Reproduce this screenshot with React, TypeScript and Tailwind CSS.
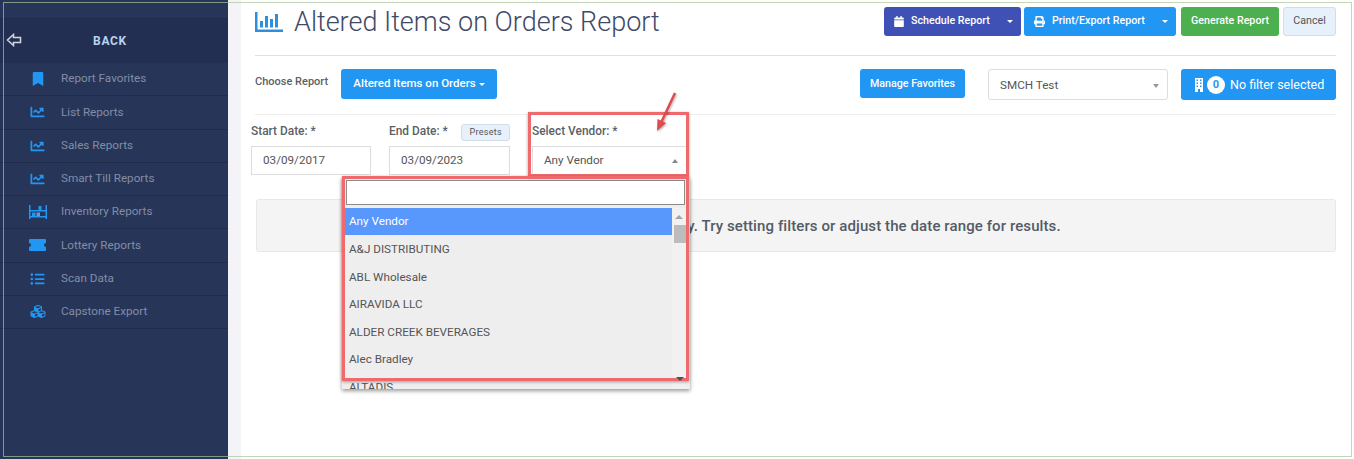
import React from "react";
import {
  FaBookmark,
  FaCalendar,
  FaChartLine,
  FaCubes,
  FaListUl,
  FaPrint,
} from "react-icons/fa";

function ShelfIcon() {
  return (
    <svg viewBox="0 0 18 14" className="h-[14px] w-[18px]">
      <path className="fill-[#2196f3]" d="M0 0h1.500v14H0zM16.500 0H18v14h-1.500zM1.500 5h15v1.500h-15zM1.500 11h15v1.500h-15zM9.500 1h3v4h-3zM3 7.500h3.500V11H3z" />
      <path className="fill-[#5f9bd8]" d="M7.500 7.500H11V11H7.500z" />
    </svg>
  );
}

function TicketIcon() {
  return (
    <svg viewBox="0 0 17 12" className="h-[12px] w-[17px] fill-[#2196f3]">
      <path d="M1 0h15a1 1 0 0 1 1 1v3a2 2 0 0 0 0 4v3a1 1 0 0 1-1 1H1a1 1 0 0 1-1-1V8a2 2 0 0 0 0-4V1a1 1 0 0 1 1-1z" />
    </svg>
  );
}

function BuildingIcon() {
  return (
    <svg viewBox="0 0 8 14" className="mr-[4px] h-[14px] w-[8px] fill-white">
      <path
        fillRule="evenodd"
        d="M0 0h8v14H5v-3H3v3H0zM1.500 1.500v1.500H3V1.500zM5 1.500v1.500h1.500V1.500zM1.500 4.500V6H3V4.500zM5 4.500V6h1.500V4.500zM1.500 7.500V9H3V7.500zM5 7.500V9h1.500V7.500z"
      />
    </svg>
  );
}

const menu = [
  { label: "Report Favorites", icon: <FaBookmark className="h-[14px] w-[12px]" /> },
  { label: "List Reports", icon: <FaChartLine className="h-[14px] w-[15px]" /> },
  { label: "Sales Reports", icon: <FaChartLine className="h-[14px] w-[15px]" /> },
  { label: "Smart Till Reports", icon: <FaChartLine className="h-[14px] w-[15px]" /> },
  { label: "Inventory Reports", icon: <ShelfIcon /> },
  { label: "Lottery Reports", icon: <TicketIcon /> },
  { label: "Scan Data", icon: <FaListUl className="h-[14px] w-[15px]" /> },
  { label: "Capstone Export", icon: <FaCubes className="h-[15px] w-[16px]" /> },
];

const vendors = [
  "A&J DISTRIBUTING",
  "ABL Wholesale",
  "AIRAVIDA LLC",
  "ALDER CREEK BEVERAGES",
  "Alec Bradley",
  "ALTADIS",
];

function Sidebar() {
  return (
    <aside className="flex h-full w-[228px] shrink-0 flex-col bg-[#273558]">
      <div className="h-[19px] border-b border-[#1f2b4b]" />
      <div className="relative flex h-[44px] items-center justify-center bg-[#222f53] pr-[8px] text-[12px] font-bold tracking-[0.7px] text-[#b9d3ee]">
        <svg viewBox="0 0 16 14" className="absolute left-[6px] top-[14px] h-[14px] w-[16px] fill-none stroke-[#d2d6dd] stroke-[1.5]">
          <path d="M7.500 1.500 1.500 7l6 5.500V9.500h7v-5h-7z" />
        </svg>
        BACK
      </div>
      {menu.map((item) => (
        <div
          key={item.label}
          className="flex h-[33.25px] items-center border-b border-[#1f2b4b] text-[11.7px] text-[#838da6]"
        >
          <span className="flex w-[61px] shrink-0 justify-center pl-[14px] text-[#2196f3]">{item.icon}</span>
          <span>{item.label}</span>
        </div>
      ))}
    </aside>
  );
}

function TopBar() {
  return (
    <div className="flex h-[56px] items-start justify-between border-b border-[#dfdfdf]">
      <div className="flex items-center pt-[3px]">
        <svg viewBox="0 0 28 20" className="mr-[11px] h-[20px] w-[28px] fill-[#2f8fdf]">
          <path d="M0 0h2.500v17.500H28V20H0zM5 9h3v6.500H5zM10 4h3v11.500h-3zM15 7h3v8.500h-3zM20 2h3v13.500h-3z" />
        </svg>
        <h1 className="text-[27px] leading-[38px] font-light text-[#3f4a68]">Altered Items on Orders Report</h1>
      </div>
      <div className="flex items-start pt-[7px] text-[10.7px] font-medium text-white">
        <button className="flex h-[29px] w-[137px] items-center rounded-[3px] bg-[#3f51b5] pl-[10px]">
          <FaCalendar className="mr-[7px] h-[11px] w-[10px]" />
          Schedule Report
          <span className="ml-[17px] h-0 w-0 border-x-[3px] border-t-[3px] border-x-transparent border-t-white" />
        </button>
        <button className="ml-[3px] flex h-[29px] w-[152px] items-center rounded-[3px] bg-[#2196f3] pl-[10px]">
          <FaPrint className="mr-[7px] h-[11px] w-[11px]" />
          Print/Export Report
          <span className="ml-[17px] h-0 w-0 border-x-[3px] border-t-[3px] border-x-transparent border-t-white" />
        </button>
        <button className="ml-[5px] h-[29px] w-[98px] rounded-[3px] bg-[#4caf50]">Generate Report</button>
        <button className="ml-[4px] h-[29px] w-[53px] rounded-[3px] border border-[#d3dde6] bg-[#e6f1fb] font-normal text-[#555]">
          Cancel
        </button>
      </div>
    </div>
  );
}

function ChooseRow() {
  return (
    <div className="flex h-[59px] items-start border-b border-[#eeeeee] pt-[13px]">
      <span className="mt-[5px] w-[86px] text-[11px] font-medium text-[#5b5f66]">Choose Report</span>
      <button className="h-[30px] w-[156px] rounded-[3px] bg-[#2196f3] text-[11.5px] font-medium text-white">
        Altered Items on Orders
        <span className="ml-[3px] inline-block h-0 w-0 border-x-[3px] border-t-[3px] border-x-transparent border-t-white align-middle" />
      </button>
      <button className="ml-[363px] h-[29px] w-[105px] rounded-[3px] bg-[#2196f3] pt-[1px] text-[10.7px] font-medium text-white">
        Manage Favorites
      </button>
      <div className="ml-[23px] flex h-[31px] w-[180px] items-center justify-between rounded-[3px] border border-[#ddd] bg-white pt-[2px] pr-[8px] pl-[11px] text-[11.7px] text-[#555]">
        SMCH Test
        <span className="h-0 w-0 border-x-[3px] border-t-[4px] border-x-transparent border-t-[#999]" />
      </div>
      <button className="ml-[13px] flex h-[31px] w-[155px] items-center rounded-[3px] bg-[#2196f3] pt-[1px] pl-[14px] text-[12.5px] text-white">
        <BuildingIcon />
        <span className="mr-[5px] flex h-[18px] w-[18px] items-center justify-center rounded-full bg-white text-[11px] font-bold text-[#2196f3]">0</span>
        No filter selected
      </button>
    </div>
  );
}

function Field({ label, value, width, children, caret }: { label: string; value: string; width: string; children?: React.ReactNode; caret?: boolean }) {
  return (
    <div className={width}>
      <div className="flex h-[31px] items-center justify-between pt-[2px] text-[11.9px] font-medium text-[#5b5f66]">
        {label}
        {children}
      </div>
      <div className="flex h-[29px] items-center justify-between border border-[#ddd] bg-white pr-[9px] pl-[11px] text-[11.7px] text-[#555]">
        {value}
        {caret && <span className="h-0 w-0 border-x-[3px] border-b-[4px] border-x-transparent border-b-[#888]" />}
      </div>
    </div>
  );
}

function VendorDropdown() {
  return (
    <div className="absolute top-[177px] left-[342px] h-[212px] w-[348px] overflow-hidden bg-[#eeeeee] px-[3px] pt-[3px] shadow-[0_2px_4px_rgba(0,0,0,0.4)]">
      <div className="mr-[2px] mb-[3px] ml-[1px] h-[25px] border border-[#8b8b8b] bg-white" />
      <div className="relative">
        <div className="flex h-[27.25px] w-[327px] items-center bg-[#5897fb] pt-[1px] pl-[4px] text-[11.7px] text-white">Any Vendor</div>
        {vendors.map((v) => (
          <div key={v} className="flex h-[27.5px] w-[327px] items-center pt-[2px] pl-[4px] text-[11.7px] text-[#555]">{v}</div>
        ))}
        <div className="absolute top-0 left-[327px] h-full w-[14px] bg-[#f1f1f1]">
          <span className="absolute top-[7px] left-[3px] h-0 w-0 border-x-[4px] border-b-[4px] border-x-transparent border-b-[#a3a3a3]" />
          <div className="absolute top-[17px] left-[2px] h-[18px] w-[12px] bg-[#bcbcbc]" />
        </div>
      </div>
    </div>
  );
}

function Annotations() {
  return (
    <>
      <div className="absolute top-[112px] left-[528px] h-[65px] w-[161px] border-[3px] border-[#ef6a6d] shadow-[0_1px_3px_rgba(0,0,0,0.35)]" />
      <div className="absolute top-[176px] left-[342px] h-[205px] w-[347px] border-[3px] border-[#ef6a6d] shadow-[0_1px_3px_rgba(0,0,0,0.35)]" />
      <span className="absolute top-[377px] left-[676px] h-0 w-0 border-x-[4px] border-t-[4px] border-x-transparent border-t-[#505050]" />
      <svg viewBox="0 0 30 50" className="absolute top-[90px] left-[652px] h-[50px] w-[30px] drop-shadow-[1px_1px_1px_rgba(0,0,0,0.3)]">
        <path d="M23 3 8 35" className="fill-none stroke-[#e2494c] stroke-[2.5]" />
        <path d="M5 41 5.500 29 14 33z" className="fill-[#e2494c]" />
      </svg>
    </>
  );
}

export default function App() {
  return (
    <div className="relative flex h-[459px] w-[1354px] overflow-hidden bg-white font-['Roboto',sans-serif]">
      <Sidebar />
      <div className="h-full w-[13px] shrink-0 bg-[#f3f3f8]" />
      <main className="min-w-0 flex-1 pr-[18px]">
        <div className="ml-[14px]">
          <TopBar />
          <ChooseRow />
        </div>
        <div className="ml-[10px] flex">
          <Field label="Start Date: *" value="03/09/2017" width="w-[120px]" />
          <div className="w-[18px]" />
          <Field label="End Date: *" value="03/09/2023" width="w-[121px]">
            <span className="mt-[2px] rounded-[3px] border border-[#d3dde6] bg-[#e6f1fb] px-[7px] py-[1px] text-[9px] font-normal tracking-[0.3px] text-[#555]">Presets</span>
          </Field>
          <div className="w-[22px]" />
          <Field label="Select Vendor: *" value="Any Vendor" width="w-[156px]" caret>
            <span />
          </Field>
        </div>
        <div className="mt-[24px] ml-[15px] flex h-[53px] items-center justify-center rounded-[3px] border border-[#e8e8e8] bg-[#f4f4f4] pt-[2px] pr-[8px] text-[15px] tracking-[0.1px] font-medium text-[#555b66]">
          Report is currently empty. Try setting filters or adjust the date range for results.
        </div>
      </main>
      <VendorDropdown />
      <Annotations />
      <div className="pointer-events-none absolute top-[2px] left-[3px] h-[455px] w-[1349px] border border-[#a9c59a]/70" />
    </div>
  );
}
